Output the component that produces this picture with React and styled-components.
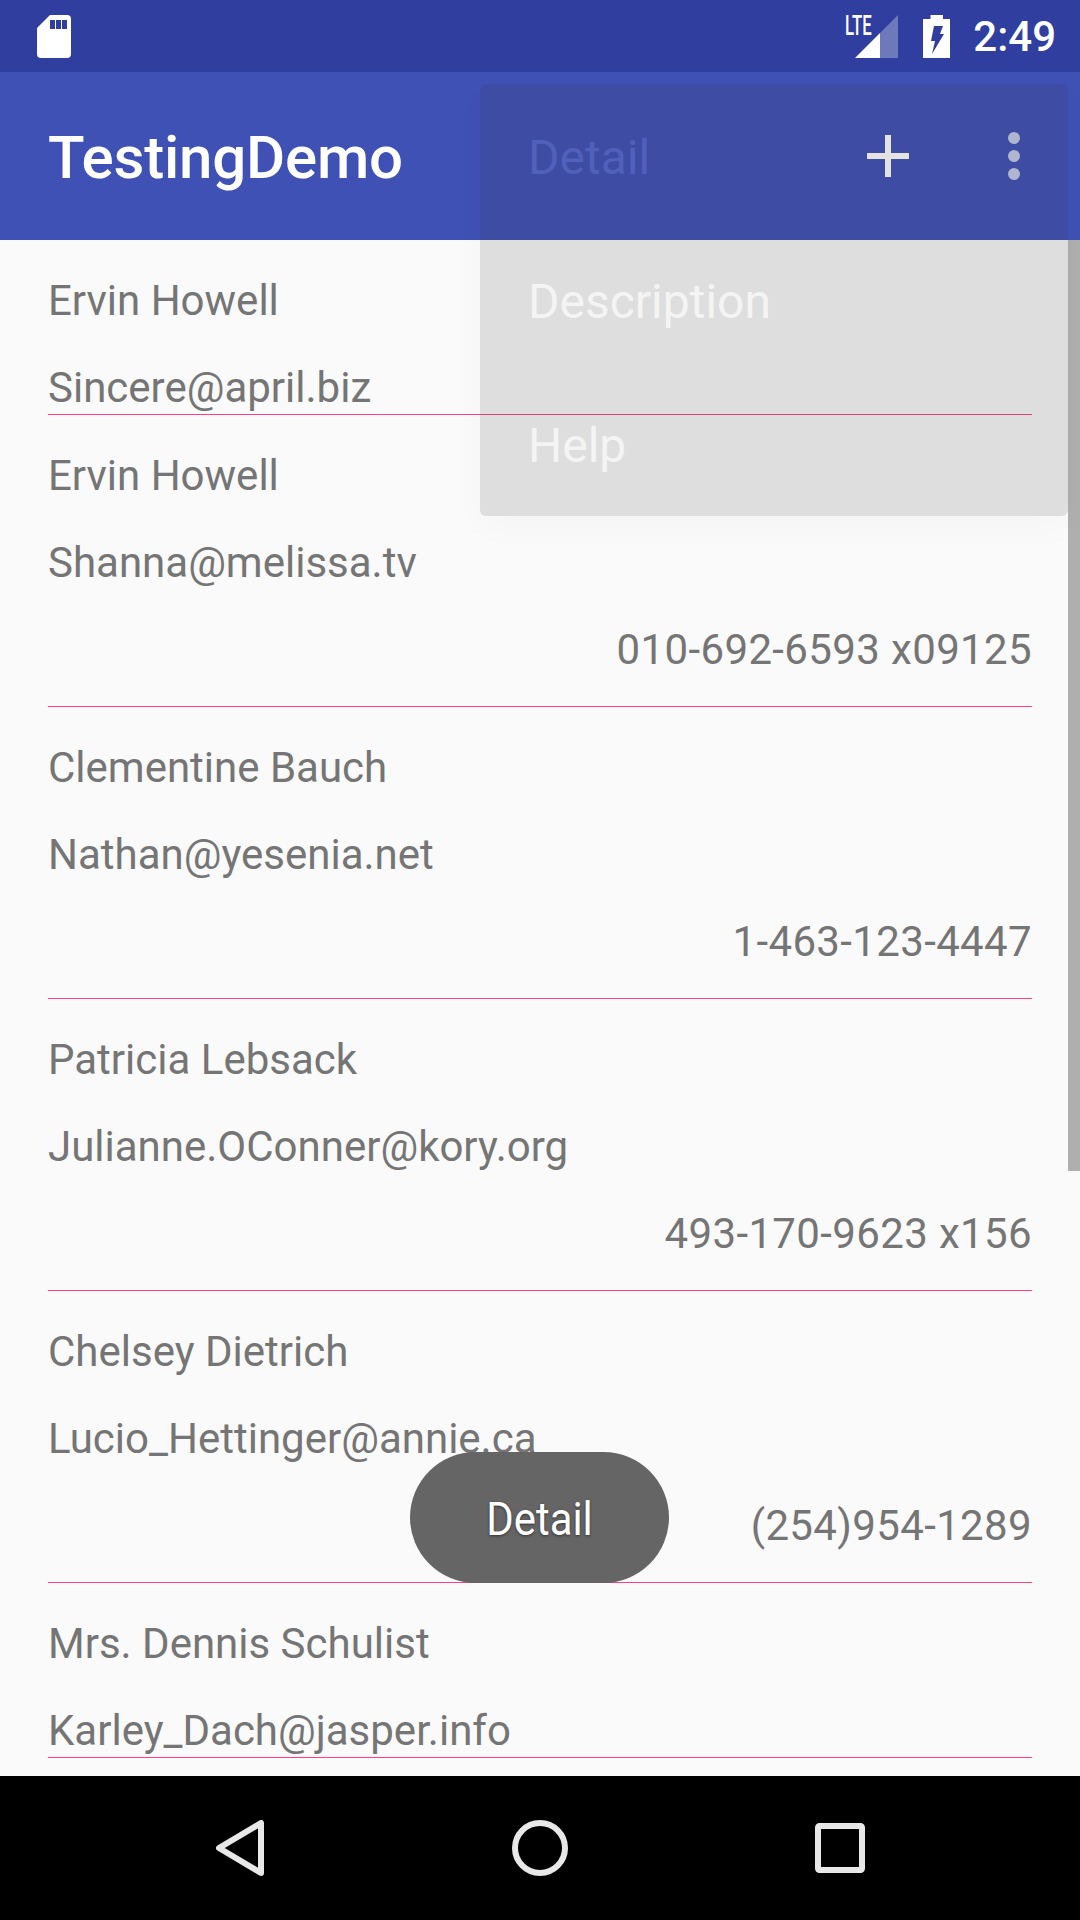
import React from 'react'
import styled, { createGlobalStyle } from 'styled-components'

const GlobalStyle = createGlobalStyle`
  html, body {
    margin: 0;
    padding: 0;
    background: #000;
    font-family: Roboto, "Noto Sans", sans-serif;
  }
`

const users = [
  { name: 'Ervin Howell', email: 'Sincere@april.biz' },
  { name: 'Ervin Howell', email: 'Shanna@melissa.tv', phone: '010-692-6593 x09125' },
  { name: 'Clementine Bauch', email: 'Nathan@yesenia.net', phone: '1-463-123-4447' },
  { name: 'Patricia Lebsack', email: 'Julianne.OConner@kory.org', phone: '493-170-9623 x156' },
  { name: 'Chelsey Dietrich', email: 'Lucio_Hettinger@annie.ca', phone: '(254)954-1289' },
  { name: 'Mrs. Dennis Schulist', email: 'Karley_Dach@jasper.info' },
]

const menuItems = [
  { label: 'Detail', color: '#5060bb' },
  { label: 'Description', color: '#f4f4f4' },
  { label: 'Help', color: '#f4f4f4' },
]

function App() {
  return (
    <Screen>
      <GlobalStyle />
      <StatusBar>
        <svg width="34" height="43" viewBox="0 0 34 43">
          <path fill="#fff" d="M13 0H30a4 4 0 0 1 4 4V39a4 4 0 0 1-4 4H4a4 4 0 0 1-4-4V13Z" />
          <path fill="#303f9f" d="M13 5h5v9h-5zM19 5h5v9h-5zM25 5h5v9h-5z" />
        </svg>
        <StatusRight>
          <Signal>
            <LteLabel>LTE</LteLabel>
            <svg width="53" height="43" viewBox="0 0 53 43">
              <path fill="#fff" d="M10 43 35 18V43Z" />
              <path fill="#fff" fillOpacity="0.3" d="M35 18 53 0V43H35Z" />
            </svg>
          </Signal>
          <svg width="27" height="43" viewBox="0 0 27 43">
            <path fill="#fff" d="M7.5 0H20V4H27V43H0V4H7.5Z" />
            <path fill="#303f9f" d="M11 11h9l-3 8h4L9 39l3-13H8Z" />
          </svg>
          <Clock>2:49</Clock>
        </StatusRight>
      </StatusBar>

      <Toolbar>
        <Title>TestingDemo</Title>
        <Actions>
          <svg width="42" height="42" viewBox="0 0 42 42">
            <path fill="#fff" d="M18 0h6v18h18v6H24v18h-6V24H0v-6h18Z" />
          </svg>
          <Overflow>
            <Dot />
            <Dot />
            <Dot />
          </Overflow>
        </Actions>
      </Toolbar>

      <List>
        {users.map((u, i) => (
          <Row key={i}>
            <Field>{u.name}</Field>
            <Field>{u.email}</Field>
            {u.phone && <Phone>{u.phone}</Phone>}
          </Row>
        ))}
        <Scrollbar />
        <Toast><ToastLabel>Detail</ToastLabel></Toast>
      </List>

      <NavBar>
        <NavButton>
          <svg width="48" height="56" viewBox="0 0 48 56">
            <path fill="none" stroke="#e8e8e8" strokeWidth="6" strokeLinejoin="round" d="M45 3V53L3 28Z" />
          </svg>
        </NavButton>
        <NavButton>
          <svg width="56" height="56" viewBox="0 0 56 56">
            <circle cx="28" cy="28" r="25" fill="none" stroke="#e8e8e8" strokeWidth="6" />
          </svg>
        </NavButton>
        <NavButton>
          <svg width="50" height="50" viewBox="0 0 50 50">
            <rect x="3" y="3" width="44" height="44" rx="1.5" fill="none" stroke="#e8e8e8" strokeWidth="6" />
          </svg>
        </NavButton>
      </NavBar>

      <Menu>
        {menuItems.map(item => (
          <MenuItem key={item.label} $color={item.color}>{item.label}</MenuItem>
        ))}
      </Menu>
    </Screen>
  )
}

export default App

const Screen = styled.div`
  position: relative;
  display: flex;
  flex-direction: column;
  width: 1080px;
  height: 1920px;
  overflow: hidden;
  background: #fafafa;
`

const StatusBar = styled.div`
  display: flex;
  align-items: center;
  justify-content: space-between;
  height: 72px;
  padding: 0 24px 0 37px;
  background: #303f9f;
`

const StatusRight = styled.div`
  display: flex;
  align-items: center;
  gap: 23px;
`

const Signal = styled.div`
  position: relative;
  display: flex;
  margin-right: 2px;
`

const LteLabel = styled.span`
  position: absolute;
  left: 0;
  top: -2px;
  font-size: 27px;
  line-height: 27px;
  font-weight: 500;
  color: #fff;
  transform: scaleX(0.62);
  transform-origin: left center;
`

const Clock = styled.span`
  font-size: 42px;
  font-weight: 500;
  color: #fff;
`

const Toolbar = styled.div`
  display: flex;
  align-items: center;
  justify-content: space-between;
  height: 168px;
  padding: 0 60px 0 48px;
  background: #3f51b5;
`

const Title = styled.h1`
  margin: 2px 0 0;
  font-size: 60px;
  font-weight: 500;
  letter-spacing: -0.2px;
  color: #fff;
`

const Actions = styled.div`
  display: flex;
  align-items: center;
  gap: 99px;
`

const Overflow = styled.div`
  display: flex;
  flex-direction: column;
  gap: 6px;
`

const Dot = styled.span`
  width: 12px;
  height: 12px;
  border-radius: 50%;
  background: rgba(255, 255, 255, 0.7);
`

const List = styled.div`
  position: relative;
  flex: 1;
  overflow: hidden;
  background: #fafafa;
`

const Row = styled.div`
  display: flex;
  flex-direction: column;
  gap: 37px;
  margin: 0 48px;
  padding-top: 36px;
  padding-bottom: 1px;
  border-bottom: 1px solid #ff4081;
`

const Field = styled.div`
  font-size: 42px;
  line-height: 50px;
  color: #757575;
`

const Phone = styled(Field)`
  margin-bottom: 30px;
  text-align: right;
  letter-spacing: 0.36px;
`

const Scrollbar = styled.div`
  position: absolute;
  top: 0;
  right: 0;
  width: 12px;
  height: 931px;
  background: #afafaf;
`

const Toast = styled.div`
  position: absolute;
  top: 1212px;
  left: 410px;
  display: flex;
  align-items: center;
  justify-content: center;
  width: 259px;
  height: 131px;
  border-radius: 66px;
  background: rgba(98, 98, 98, 0.98);
`

const ToastLabel = styled.span`
  margin-top: 3px;
  font-size: 46px;
  color: #fff;
  text-shadow: 0 1px 3px rgba(0, 0, 0, 0.5);
  transform: scaleX(0.91);
`

const NavBar = styled.div`
  display: flex;
  align-items: center;
  justify-content: center;
  height: 144px;
  background: #000;
`

const NavButton = styled.div`
  display: flex;
  align-items: center;
  justify-content: center;
  width: 300px;
`

const Menu = styled.div`
  position: absolute;
  top: 84px;
  right: 12px;
  width: 588px;
  border-radius: 6px;
  background: rgba(57, 57, 57, 0.14);
  box-shadow: 0 12px 36px rgba(0, 0, 0, 0.025);
`

const MenuItem = styled.div`
  display: flex;
  align-items: center;
  height: 144px;
  padding: 2px 0 0 48px;
  box-sizing: border-box;
  font-size: 48px;
  color: ${p => p.$color};
`
